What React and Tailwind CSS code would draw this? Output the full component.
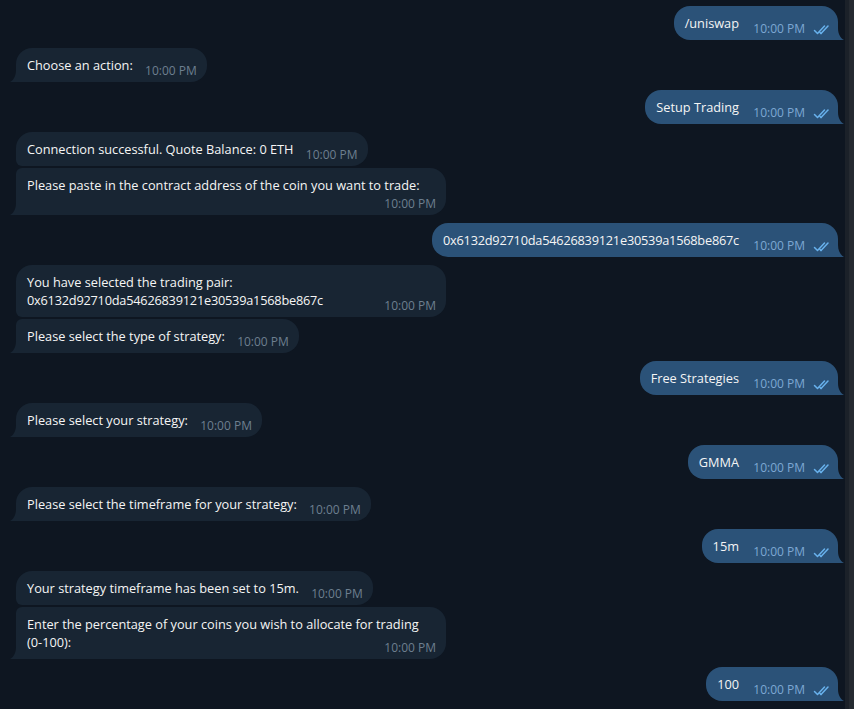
import React from "react";

const ADDR = "0x6132d92710da54626839121e30539a1568be867c";

const messages = [
  { out: true, items: ["/uniswap"] },
  { out: false, items: ["Choose an action:"] },
  { out: true, items: ["Setup Trading"] },
  {
    out: false,
    items: [
      "Connection successful. Quote Balance: 0 ETH",
      "Please paste in the contract address of the coin you want to trade:",
    ],
  },
  { out: true, items: [ADDR] },
  {
    out: false,
    items: [
      "You have selected the trading pair: " + ADDR,
      "Please select the type of strategy:",
    ],
  },
  { out: true, items: ["Free Strategies"] },
  { out: false, items: ["Please select your strategy:"] },
  { out: true, items: ["GMMA"] },
  { out: false, items: ["Please select the timeframe for your strategy:"] },
  { out: true, items: ["15m"] },
  {
    out: false,
    items: [
      "Your strategy timeframe has been set to 15m.",
      "Enter the percentage of your coins you wish to allocate for trading (0-100):",
    ],
  },
  { out: true, items: ["100"] },
];

function Checks() {
  return (
    <svg width="20" height="11" viewBox="0 0 20 11" fill="none" stroke="#68b1ec" strokeWidth="1.5" strokeLinecap="round" strokeLinejoin="round">
      <path d="M1.5 6.5 L4.5 9.5 L11.5 2" />
      <path d="M8 9.5 L15 2" />
      <path d="M6.8 8.3 L8 9.5" />
    </svg>
  );
}

function TailIn() {
  return (
    <svg className="absolute left-[-6px] bottom-0" width="10" height="12" viewBox="0 0 10 12">
      <path d="M6 0 C6 6 3.5 10 0 12 H10 V0 Z" fill="#182533" />
    </svg>
  );
}

function TailOut() {
  return (
    <svg className="absolute right-[-6px] bottom-0" width="10" height="12" viewBox="0 0 10 12">
      <path d="M4 0 C4 6 6.5 10 10 12 H0 V0 Z" fill="#2b5278" />
    </svg>
  );
}

function RichText({ text }) {
  const idx = text.indexOf(ADDR);
  if (idx === -1) return text;
  return (
    <>
      {text.slice(0, idx)}
      <span className="tracking-[-0.22px]">{ADDR}</span>
      {text.slice(idx + ADDR.length)}
    </>
  );
}

function Bubble({ text, out, first, last }) {
  let radius;
  if (out) {
    radius = [
      "rounded-tl-[16px] rounded-bl-[16px]",
      first ? "rounded-tr-[16px]" : "rounded-tr-[6px]",
      last ? "rounded-br-none" : "rounded-br-[6px]",
    ].join(" ");
  } else {
    radius = [
      "rounded-tr-[16px] rounded-br-[16px]",
      first ? "rounded-tl-[16px]" : "rounded-tl-[6px]",
      last ? "rounded-bl-none" : "rounded-bl-[6px]",
    ].join(" ");
  }
  return (
    <div
      className={
        "relative max-w-[430px] px-[11px] pt-[8px] pb-[8px] text-[12.75px] leading-[12px] text-[#f5f5f5] " +
        (out ? "bg-[#2b5278] " : "bg-[#182533] ") +
        radius
      }
    >
      <span className="leading-[18px] break-words">
        <RichText text={text} />
      </span>
      <span className={"inline-block h-[12px] " + (out ? "w-[88px]" : "w-[63px]")} />
      {out ? (
        <div className="absolute right-[5px] bottom-[5px] flex items-center gap-[8px]">
          <span className="text-[12px] leading-[12px] text-[#7da8d3]">10:00 PM</span>
          <Checks />
        </div>
      ) : (
        <span className="absolute right-[10px] bottom-[5px] text-[12px] leading-[12px] text-[#6d7f8f]">10:00 PM</span>
      )}
      {last && (out ? <TailOut /> : <TailIn />)}
    </div>
  );
}

export default function App() {
  return (
    <div
      className="flex h-[709px] w-[854px] overflow-hidden bg-[#0e1621]"
      style={{ fontFamily: '"Open Sans", "Noto Sans", sans-serif' }}
    >
      <div className="flex flex-1 flex-col gap-[8px] pl-[16px] pr-[7px] pt-[6px]">
        {messages.map((g, gi) => (
          <div key={gi} className={"flex flex-col gap-[2px] " + (g.out ? "items-end" : "items-start")}>
            {g.items.map((t, i) => (
              <Bubble
                key={i}
                text={t}
                out={g.out}
                first={i === 0}
                last={i === g.items.length - 1}
              />
            ))}
          </div>
        ))}
      </div>
      <div className="flex h-full">
        <div className="w-[4px] bg-[#1b2129]" />
        <div className="w-[5px] bg-[#252a31]" />
      </div>
    </div>
  );
}
